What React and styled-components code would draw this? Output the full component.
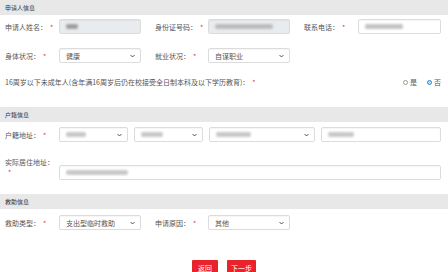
import React from 'react';
import styled, { createGlobalStyle } from 'styled-components';

const Global = createGlobalStyle`
  html, body { margin: 0; padding: 0; background: #fff; }
  body { font-family: "Noto Sans CJK SC", "Noto Sans", sans-serif; color: #555; }
`;

const Page = styled.div`
  width: 448px;
  height: 272px;
  overflow: hidden;
  display: flex;
  flex-direction: column;
`;

const SectionHeader = styled.div`
  flex: none;
  height: 15px;
  line-height: 15px;
  background: #e9e8e8;
  padding-left: 5px;
  font-size: 6px;
  color: #333;
  margin-top: ${p => p.$mt || 0}px;
`;

const Row = styled.div`
  display: flex;
  align-items: ${p => p.$align || 'center'};
  gap: ${p => (p.$gap ?? 14)}px;
  padding: 0 7px 0 5px;
  margin-top: ${p => p.$mt || 0}px;
`;

const Field = styled.div`
  display: flex;
  align-items: ${p => p.$align || 'center'};
  flex: ${p => (p.$grow ? 1 : 'none')};
`;

const Label = styled.div`
  width: ${p => p.$w}px;
  flex: none;
  font-size: 7px;
  line-height: 10px;
  color: #555;
`;

const Req = styled.span`
  color: #e4393c;
  margin-left: 3px;
`;

const Box = styled.div`
  width: ${p => (p.$w ? `${p.$w}px` : 'auto')};
  flex: ${p => (p.$w ? 'none' : 1)};
  height: 15px;
  margin-top: ${p => p.$mt || 0}px;
  box-sizing: border-box;
  border: 1px solid #dcdcdc;
  border-radius: 2px;
  background: ${p => (p.$disabled ? '#e9ecef' : '#fff')};
  display: flex;
  align-items: center;
  justify-content: space-between;
  padding: 0 5px 0 6px;
  font-size: 7px;
  color: #555;
  box-shadow: inset 0 1px 1px rgba(0, 0, 0, 0.04);
`;

const Mask = styled.span`
  display: block;
  width: ${p => p.$w}px;
  height: 5px;
  background: ${p => p.$c || '#c9c9c9'};
  border-radius: 2px;
  filter: blur(0.8px);
`;

const Controls = styled.div`
  display: flex;
  flex: 1;
  gap: 6px;
`;

const Question = styled.div`
  font-size: 7px;
  line-height: 14px;
  color: #555;
`;

const Radios = styled.div`
  margin-left: auto;
  display: flex;
  gap: 10px;
  font-size: 7px;
  line-height: 14px;
  color: #555;
`;

const RadioItem = styled.label`
  display: flex;
  align-items: center;
  gap: 2px;
`;

const Dot = styled.span`
  width: 5px;
  height: 5px;
  box-sizing: border-box;
  border-radius: 50%;
  border: 1px solid ${p => (p.$on ? '#2d8cf0' : '#999')};
  background: ${p => (p.$on ? '#2d8cf0' : '#fff')};
  box-shadow: ${p => (p.$on ? 'inset 0 0 0 1px #fff' : 'none')};
`;

const Divider = styled.div`
  height: 1px;
  background: #e2e2e2;
  margin-top: ${p => p.$mt || 0}px;
`;

const Actions = styled.div`
  display: flex;
  justify-content: center;
  gap: 9px;
  margin-top: 12px;
`;

const Button = styled.button`
  height: 16px;
  min-width: 26px;
  padding: 0 4px;
  border: none;
  border-radius: 1px;
  background: #e8232b;
  color: #fff;
  font-family: inherit;
  font-size: 7px;
  line-height: 16px;
`;

const Chevron = () => (
  <svg width="5" height="4" viewBox="0 0 5 4">
    <path d="M0.5 1 L2.5 3 L4.5 1" fill="none" stroke="#444" strokeWidth="0.9" />
  </svg>
);

const Select = ({ w, children }) => (
  <Box $w={w}>
    <span>{children}</span>
    <Chevron />
  </Box>
);

export default function App() {
  return (
    <Page>
      <Global />
      <SectionHeader>申请人信息</SectionHeader>
      <Row $mt={4}>
        <Field>
          <Label $w={54}>申请人姓名：<Req>*</Req></Label>
          <Box $w={82} $disabled><Mask $w={12} $c="#9f9f9f" /></Box>
        </Field>
        <Field>
          <Label $w={53}>身份证号码：<Req>*</Req></Label>
          <Box $w={82} $disabled><Mask $w={58} $c="#bdbdbd" /></Box>
        </Field>
        <Field $grow>
          <Label $w={54}>联系电话：<Req>*</Req></Label>
          <Box><Mask $w={38} $c="#c4c4c4" /></Box>
        </Field>
      </Row>
      <Row $mt={14}>
        <Field>
          <Label $w={54}>身体状况：<Req>*</Req></Label>
          <Select w={82}>健康</Select>
        </Field>
        <Field>
          <Label $w={53}>就业状况：<Req>*</Req></Label>
          <Select w={82}>自谋职业</Select>
        </Field>
      </Row>
      <Row $mt={12}>
        <Question>16周岁以下未成年人(含年满16周岁后仍在校接受全日制本科及以下学历教育)：<Req>*</Req></Question>
        <Radios>
          <RadioItem><Dot />是</RadioItem>
          <RadioItem><Dot $on />否</RadioItem>
        </Radios>
      </Row>

      <SectionHeader $mt={18}>户籍信息</SectionHeader>
      <Row $mt={5}>
        <Field $grow>
          <Label $w={54}>户籍地址：<Req>*</Req></Label>
          <Controls>
            <Select w={69}><Mask $w={20} /></Select>
            <Select w={69}><Mask $w={22} /></Select>
            <Select w={106}><Mask $w={35} /></Select>
            <Box><Mask $w={26} /></Box>
          </Controls>
        </Field>
      </Row>
      <Row $mt={15}>
        <Field $grow $align="flex-start">
          <Label $w={54}>实际居住地址：<Req>*</Req></Label>
          <Box $mt={8}><Mask $w={62} /></Box>
        </Field>
      </Row>

      <SectionHeader $mt={14}>救助信息</SectionHeader>
      <Row $mt={6}>
        <Field>
          <Label $w={54}>救助类型：<Req>*</Req></Label>
          <Select w={82}>支出型临时救助</Select>
        </Field>
        <Field>
          <Label $w={53}>申请原因：<Req>*</Req></Label>
          <Select w={82}>其他</Select>
        </Field>
      </Row>
      <Divider $mt={18} />
      <Actions>
        <Button>返回</Button>
        <Button>下一步</Button>
      </Actions>
    </Page>
  );
}
